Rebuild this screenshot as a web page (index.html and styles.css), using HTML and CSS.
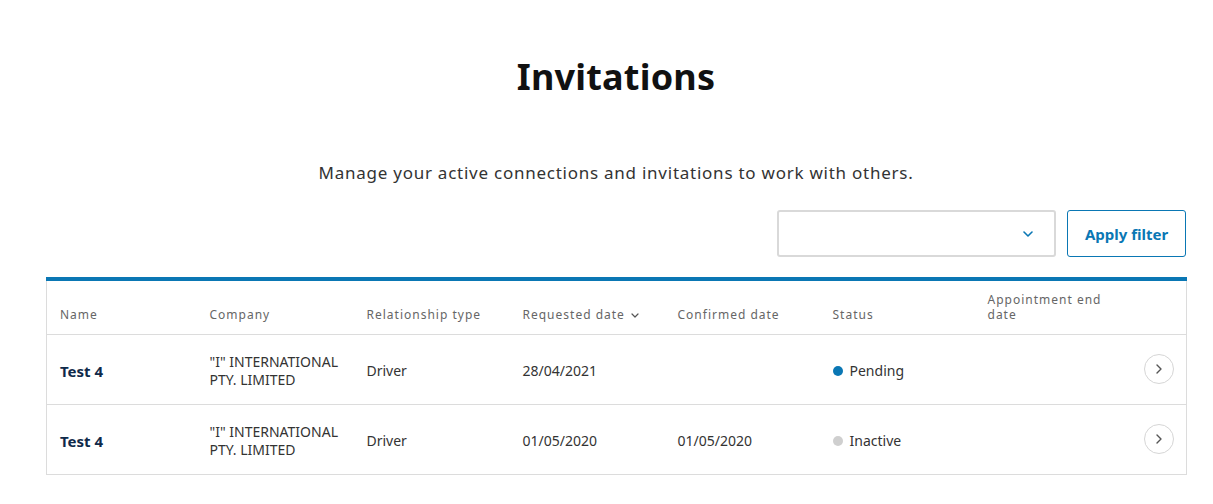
FILE: index.html
```html
<!DOCTYPE html>
<html>
<head>
<meta charset="utf-8">
<link rel="stylesheet" href="styles.css">
</head>
<body>
<main class="page">
  <h1 class="title">Invitations</h1>
  <p class="subtitle">Manage your active connections and invitations to work with others.</p>
  <div class="filters">
    <div class="select">
      <svg class="select-chev" width="10" height="6" viewBox="0 0 10 6"><path d="M1 1l4 4 4-4" fill="none" stroke="#0a77b4" stroke-width="1.6" stroke-linecap="round" stroke-linejoin="round"/></svg>
    </div>
    <button class="btn">Apply filter</button>
  </div>
  <table class="table">
    <colgroup>
      <col class="c1"><col class="c2"><col class="c3"><col class="c4"><col class="c5"><col class="c6"><col class="c7"><col class="c8">
    </colgroup>
    <thead>
      <tr>
        <th>Name</th>
        <th>Company</th>
        <th>Relationship type</th>
        <th>Requested date <svg class="sort" width="8" height="5" viewBox="0 0 8 5"><path d="M1 1l3 3 3-3" fill="none" stroke="#555" stroke-width="1.2" stroke-linecap="round" stroke-linejoin="round"/></svg></th>
        <th>Confirmed date</th>
        <th>Status</th>
        <th>Appointment end date</th>
        <th></th>
      </tr>
    </thead>
    <tbody>
      <tr>
        <td class="name">Test 4</td>
        <td>"I" INTERNATIONAL PTY. LIMITED</td>
        <td>Driver</td>
        <td>28/04/2021</td>
        <td></td>
        <td><span class="status"><span class="dot dot-pending"></span>Pending</span></td>
        <td></td>
        <td class="act"><span class="circle"><svg width="6" height="10" viewBox="0 0 6 10"><path d="M1 1l4 4-4 4" fill="none" stroke="#555" stroke-width="1.4" stroke-linecap="round" stroke-linejoin="round"/></svg></span></td>
      </tr>
      <tr>
        <td class="name">Test 4</td>
        <td>"I" INTERNATIONAL PTY. LIMITED</td>
        <td>Driver</td>
        <td>01/05/2020</td>
        <td>01/05/2020</td>
        <td><span class="status"><span class="dot dot-inactive"></span>Inactive</span></td>
        <td></td>
        <td class="act"><span class="circle"><svg width="6" height="10" viewBox="0 0 6 10"><path d="M1 1l4 4-4 4" fill="none" stroke="#555" stroke-width="1.4" stroke-linecap="round" stroke-linejoin="round"/></svg></span></td>
      </tr>
    </tbody>
  </table>
</main>
</body>
</html>
```

FILE: styles.css
```css
* { box-sizing: border-box; }
html, body { margin: 0; padding: 0; background: #fff; }
body { font-family: "Noto Sans", "DejaVu Sans", sans-serif; color: #333; }
.page { width: 1140px; margin-left: 46px; }
.title {
  margin: 0; padding-top: 54px;
  text-align: center; font-size: 36px; font-weight: 700; color: #111;
  line-height: 46px; letter-spacing: 0.2px;
}
.subtitle {
  margin: 62px 0 0; text-align: center; font-size: 17px; letter-spacing: 0.75px;
  line-height: 22px; color: #333;
}
.filters { display: flex; justify-content: flex-end; gap: 11px; margin-top: 26px; }
.select {
  width: 279px; height: 47px; border: 2px solid #d9d9d9; border-radius: 3px;
  display: flex; align-items: center; justify-content: flex-end; padding-right: 21px;
}
.btn {
  width: 119px; height: 47px; border: 1px solid #0a77b4; border-radius: 3px; background: #fff;
  color: #0a77b4; font-family: inherit; font-size: 15px; font-weight: 700; padding: 0;
}
.table {
  width: 1140px; margin-top: 20px; border-collapse: collapse; table-layout: fixed;
  border-top: 4px solid #0a77b4; border-left: 1px solid #dcdcdc; border-right: 1px solid #dcdcdc;
}
.c1 { width: 150px; } .c2 { width: 157px; } .c3 { width: 156px; } .c4 { width: 155px; }
.c5 { width: 155px; } .c6 { width: 155px; } .c7 { width: 155px; } .c8 { width: 57px; }
th {
  text-align: left; font-weight: 400; font-size: 12px; letter-spacing: 1px; color: #666;
  height: 55px; padding: 0 8px 12px 13px; vertical-align: bottom; line-height: 15px;
  border-bottom: 1px solid #dcdcdc;
}
.sort { vertical-align: middle; margin-left: 2px; }
td {
  height: 70px; padding: 3px 13px 0; font-size: 14px; line-height: 18px; color: #333;
  border-bottom: 1px solid #dcdcdc; vertical-align: middle;
}
td.name { font-weight: 700; font-size: 15px; color: #0f2a4a; }
.status { display: inline-flex; align-items: center; gap: 7px; }
.dot { width: 10px; height: 10px; border-radius: 50%; display: inline-block; }
.dot-pending { background: #0a77b4; }
.dot-inactive { background: #cfcfcf; }
td.act { text-align: right; padding: 0 12px 0 0; }
.circle {
  display: inline-flex; width: 30px; height: 30px; border-radius: 50%; border: 1px solid #d6d6d6;
  align-items: center; justify-content: center;
}
```
